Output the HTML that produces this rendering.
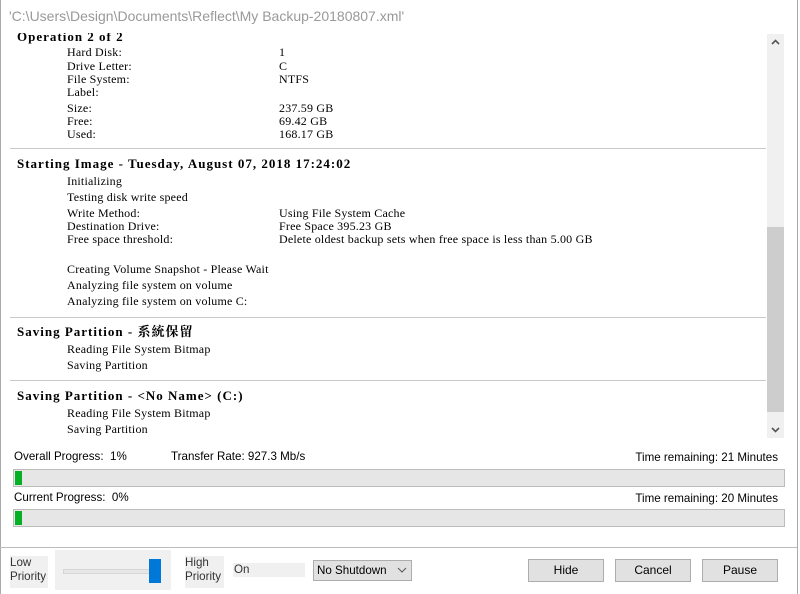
<!DOCTYPE html>
<html><head><meta charset="utf-8"><style>
body{margin:0;width:800px;height:594px;overflow:hidden;background:#fff;position:relative;font-family:"Liberation Sans","Noto Sans CJK TC",sans-serif}
.a{position:absolute;white-space:nowrap}
.s{font-family:"Liberation Serif","Noto Serif CJK SC",serif;font-size:12px;line-height:14px;color:#000;letter-spacing:0.2px}
.h{font-family:"Liberation Serif","Noto Serif CJK SC",serif;font-size:13px;line-height:14px;font-weight:bold;color:#000;letter-spacing:1px}
.u{font-size:11.6px;line-height:14px;color:#000}
.sep{position:absolute;left:10px;width:756px;height:1px;background:#c8c8c8}
.bar{position:absolute;left:13px;width:772px;height:18px;background:#e6e6e6;border:1px solid #bcbcbc;box-sizing:border-box}
.bar i{position:absolute;left:1px;top:1px;width:7px;height:14px;background:#06b025}
.btn{position:absolute;top:559px;height:23px;width:76px;background:#e1e1e1;border:1px solid #adadad;box-sizing:border-box;font-size:12px;text-align:center;line-height:21px}
.g{background:#f0f0f0}
</style></head><body>
<div class="a" style="left:0;top:0;width:1px;height:594px;background:#aaa"></div>
<div class="a" style="left:797px;top:0;width:1px;height:594px;background:#aaa"></div>
<div class="a" style="left:9px;top:8px;font-size:14px;color:#999">'C:\Users\Design\Documents\Reflect\My Backup-20180807.xml'</div>

<div style="position:absolute;left:0;top:33px;width:767px;height:406px;overflow:hidden">
<div class="a h" style="left:17px;top:-3px">Operation 2 of 2</div>
</div>
<div class="a s" style="left:67px;top:45px">Hard Disk:</div><div class="a s" style="left:279px;top:45px">1</div>
<div class="a s" style="left:67px;top:59px">Drive Letter:</div><div class="a s" style="left:279px;top:59px">C</div>
<div class="a s" style="left:67px;top:72px">File System:</div><div class="a s" style="left:279px;top:72px">NTFS</div>
<div class="a s" style="left:67px;top:85px">Label:</div>
<div class="a s" style="left:67px;top:101px">Size:</div><div class="a s" style="left:279px;top:101px">237.59 GB</div>
<div class="a s" style="left:67px;top:114px">Free:</div><div class="a s" style="left:279px;top:114px">69.42 GB</div>
<div class="a s" style="left:67px;top:127px">Used:</div><div class="a s" style="left:279px;top:127px">168.17 GB</div>
<div class="sep" style="top:148px"></div>
<div class="a h" style="left:17px;top:157px">Starting Image - Tuesday, August 07, 2018 17:24:02</div>
<div class="a s" style="left:67px;top:174px">Initializing</div>
<div class="a s" style="left:67px;top:190px">Testing disk write speed</div>
<div class="a s" style="left:67px;top:206px">Write Method:</div><div class="a s" style="left:279px;top:206px">Using File System Cache</div>
<div class="a s" style="left:67px;top:219px">Destination Drive:</div><div class="a s" style="left:279px;top:219px">Free Space 395.23 GB</div>
<div class="a s" style="left:67px;top:232px">Free space threshold:</div><div class="a s" style="left:279px;top:232px">Delete oldest backup sets when free space is less than 5.00 GB</div>
<div class="a s" style="left:67px;top:262px">Creating Volume Snapshot - Please Wait</div>
<div class="a s" style="left:67px;top:278px">Analyzing file system on volume</div>
<div class="a s" style="left:67px;top:294px">Analyzing file system on volume C:</div>
<div class="sep" style="top:317px"></div>
<div class="a h" style="left:17px;top:325px">Saving Partition - 系統保留</div>
<div class="a s" style="left:67px;top:342px">Reading File System Bitmap</div>
<div class="a s" style="left:67px;top:358px">Saving Partition</div>
<div class="sep" style="top:380px"></div>
<div class="a h" style="left:17px;top:389px">Saving Partition - &lt;No Name&gt; (C:)</div>
<div class="a s" style="left:67px;top:406px">Reading File System Bitmap</div>
<div class="a s" style="left:67px;top:422px">Saving Partition</div>

<div class="a" style="left:767px;top:34px;width:17px;height:404px;background:#f0f0f0"></div>
<div class="a" style="left:767px;top:227px;width:17px;height:185px;background:#cdcdcd"></div>
<svg class="a" style="left:767px;top:34px" width="17" height="17"><path d="M5 10 L8.5 6.5 L12 10" stroke="#555" stroke-width="1.6" fill="none"/></svg>
<svg class="a" style="left:767px;top:421px" width="17" height="17"><path d="M5 7 L8.5 10.5 L12 7" stroke="#555" stroke-width="1.6" fill="none"/></svg>

<div class="a u" style="left:14px;top:450px">Overall Progress:&nbsp; 1%</div>
<div class="a u" style="left:171px;top:450px">Transfer Rate: 927.3 Mb/s</div>
<div class="a u" style="right:22px;top:451px">Time remaining: 21 Minutes</div>
<div class="bar" style="top:469px"><i></i></div>
<div class="a u" style="left:14px;top:491px">Current Progress:&nbsp; 0%</div>
<div class="a u" style="right:22px;top:492px">Time remaining: 20 Minutes</div>
<div class="bar" style="top:509px"><i></i></div>
<div class="a" style="left:0;top:547px;width:797px;height:1px;background:#bcbcbc"></div>

<div class="a g u" style="left:10px;top:556px;width:38px;height:32px;color:#333">Low<br>Priority</div>
<div class="a g" style="left:55px;top:550px;width:116px;height:40px"></div>
<div class="a" style="left:63px;top:569px;width:96px;height:3px;background:#e6e6e6;border:1px solid #d6d6d6"></div>
<div class="a" style="left:149px;top:559px;width:12px;height:24px;background:#0078d7"></div>
<div class="a g u" style="left:185px;top:556px;width:39px;height:32px;color:#333">High<br>Priority</div>
<div class="a g u" style="left:233px;top:563px;width:72px;height:14px;text-indent:1px;color:#333">On</div>
<div class="a u" style="left:313px;top:560px;width:99px;height:21px;background:#e1e1e1;border:1px solid #adadad;box-sizing:border-box;line-height:19px;padding-left:3px">No Shutdown</div>
<svg class="a" style="left:396px;top:565px" width="12" height="10"><path d="M2 3 L6 7 L10 3" stroke="#555" fill="none"/></svg>
<div class="btn" style="left:528px">Hide</div>
<div class="btn" style="left:615px">Cancel</div>
<div class="btn" style="left:702px">Pause</div>
</body></html>
